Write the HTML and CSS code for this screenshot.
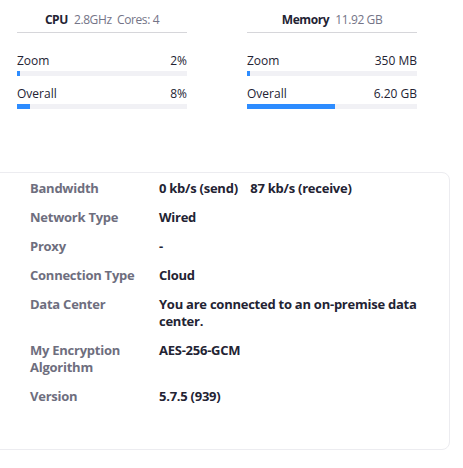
FILE: index.html
```html
<!DOCTYPE html>
<html>
<head>
<meta charset="utf-8">
<link rel="stylesheet" href="styles.css">
</head>
<body>
<div class="stats">
  <div class="col">
    <div class="head"><b>CPU</b><span class="sub">2.8GHz&nbsp; Cores: 4</span></div>
    <div class="row"><span>Zoom</span><span>2%</span></div>
    <div class="bar"><div class="fill" style="width:3px"></div></div>
    <div class="row"><span>Overall</span><span>8%</span></div>
    <div class="bar"><div class="fill" style="width:13px"></div></div>
  </div>
  <div class="col">
    <div class="head"><b>Memory</b><span class="sub">11.92 GB</span></div>
    <div class="row"><span>Zoom</span><span>350 MB</span></div>
    <div class="bar"><div class="fill" style="width:3px"></div></div>
    <div class="row"><span>Overall</span><span>6.20 GB</span></div>
    <div class="bar"><div class="fill" style="width:88px"></div></div>
  </div>
</div>
<div class="card">
  <div class="info"><div class="lbl">Bandwidth</div><div class="val">0 kb/s (send)&nbsp;&nbsp;&nbsp; 87 kb/s (receive)</div></div>
  <div class="info"><div class="lbl">Network Type</div><div class="val">Wired</div></div>
  <div class="info"><div class="lbl">Proxy</div><div class="val">-</div></div>
  <div class="info"><div class="lbl">Connection Type</div><div class="val">Cloud</div></div>
  <div class="info"><div class="lbl">Data Center</div><div class="val">You are connected to an on-premise data center.</div></div>
  <div class="info"><div class="lbl">My Encryption Algorithm</div><div class="val">AES-256-GCM</div></div>
  <div class="info"><div class="lbl">Version</div><div class="val">5.7.5 (939)</div></div>
</div>
</body>
</html>
```
FILE: styles.css
```css
html, body { margin: 0; padding: 0; background: #fff; }
body { font-family: "Open Sans", "Noto Sans", sans-serif; color: #232333; width: 463px; height: 468px; overflow: hidden; }
.stats { display: flex; gap: 60px; padding: 11px 0 0 17px; }
.col { width: 170px; }
.head { text-align: center; font-size: 12px; letter-spacing: -0.4px; line-height: 17px; padding-bottom: 4px; border-bottom: 1px solid #d6d6da; margin-bottom: 20px; }
.head b { font-weight: 700; color: #232333; margin-right: 6px; }
.sub { color: #747487; }
.row { display: flex; justify-content: space-between; font-size: 12px; line-height: 16px; color: #232333; }
.bar { height: 5px; background: #f1f1f5; margin: 2px 0 10px; }
.fill { height: 100%; background: #2d8cff; }
.card { margin: 53px 0 0 -10px; width: 460px; height: 278px; border: 1px solid #ececf0; border-radius: 8px; padding: 7px 0 0 39px; box-sizing: border-box; }
.info { display: flex; font-size: 13px; letter-spacing: -0.25px; line-height: 17px; font-weight: 700; margin-bottom: 12px; }
.lbl { width: 129px; color: #6e6e7e; padding-right: 10px; box-sizing: border-box; }
.val { width: 280px; color: #232333; }
```
